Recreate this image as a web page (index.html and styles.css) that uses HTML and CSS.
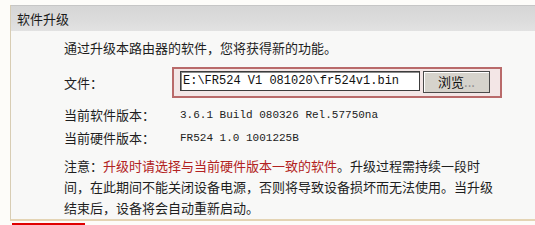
FILE: index.html
```html
<!DOCTYPE html>
<html>
<head>
<meta charset="utf-8">
<link rel="stylesheet" href="styles.css">
</head>
<body>
<div class="panel">
  <div class="header">软件升级</div>
  <div class="content">
    <p class="intro">通过升级本路由器的软件，您将获得新的功能。</p>
    <div class="row file-row">
      <span class="label file-label">文件：</span>
      <div class="filebox">
        <div class="input">E:\FR524 V1 081020\fr524v1.bin</div>
        <div class="button">浏览<span class="dots">...</span></div>
      </div>
    </div>
    <div class="row info-row first">
      <span class="label">当前软件版本：</span>
      <span class="value">3.6.1 Build 080326 Rel.57750na</span>
    </div>
    <div class="row info-row">
      <span class="label">当前硬件版本：</span>
      <span class="value">FR524 1.0 1001225B</span>
    </div>
    <p class="note">注意：<span class="warn">升级时请选择与当前硬件版本一致的软件</span>。升级过程需持续一段时间，在此期间不能关闭设备电源，否则将导致设备损坏而无法使用。当升级结束后，设备将会自动重新启动。</p>
  </div>
</div>
<div class="redbox"></div>
</body>
</html>
```
FILE: styles.css
```css
html, body {
  margin: 0;
  padding: 0;
}
body {
  background: #fdfcf9;
  font-family: "Noto Sans CJK SC", "Noto Sans", sans-serif;
  font-size: 13px;
  color: #1e1e1e;
  overflow: hidden;
  width: 535px;
  height: 225px;
}
.panel {
  margin: 5px 0 0 10px;
  width: 540px;
  border-left: 1px solid #d8cdb4;
  border-bottom: 2px solid #e4d4b4;
  background: #f8f8f7;
}
.header {
  height: 25px;
  line-height: 25px;
  border-top: 1px solid #c6c6c6;
  background: linear-gradient(#d6d6d6, #dcdcdc 60%, #e2e2e2);
  padding-left: 6px;
  color: #1a1a1a;
}
.content {
  padding: 0 0 0 53px;
}
.intro {
  margin: 0;
  padding-top: 6px;
  line-height: 22px;
}
.row {
  display: flex;
  align-items: center;
}
.file-row {
  margin-top: 8px;
}
.file-label {
  width: 108px;
}
.label {
  flex: none;
}
.info-row .label {
  width: 116px;
}
.info-row {
  height: 23px;
}
.info-row.first {
  margin-top: 5px;
}
.value {
  font-family: "Liberation Mono", "DejaVu Sans Mono", monospace;
  font-size: 11px;
  color: #222;
}
.filebox {
  display: flex;
  gap: 3px;
  width: 314px;
  border: 2px solid #b96a6a;
  background: #f3e6e6;
  padding: 2px 6px 3px 6px;
}
.input {
  width: 236px;
  height: 18px;
  padding-left: 2px;
  border: 1px solid #3c3c3c;
  box-shadow: inset 1px 1px 0 #8a8a8a;
  background: #fff;
  font-family: "Liberation Mono", "DejaVu Sans Mono", monospace;
  font-size: 12px;
  color: #111;
  white-space: nowrap;
  display: flex;
  align-items: center;
}
.button {
  width: 65px;
  height: 20px;
  line-height: 20px;
  border: 1px solid #4a4a4a;
  box-shadow: inset 1px 1px 0 #fff;
  background: #d6d3cc;
  text-align: center;
  color: #111;
}
.dots {
  color: #8a8a8a;
}
.note {
  margin: 6px 0 0 0;
  width: 432px;
  line-height: 21px;
  height: 64px;
}
.warn {
  color: #b22222;
}
.redbox {
  margin: 2px 0 0 12px;
  width: 67px;
  height: 20px;
  border: 3px solid #e00000;
  border-bottom: none;
}
```
